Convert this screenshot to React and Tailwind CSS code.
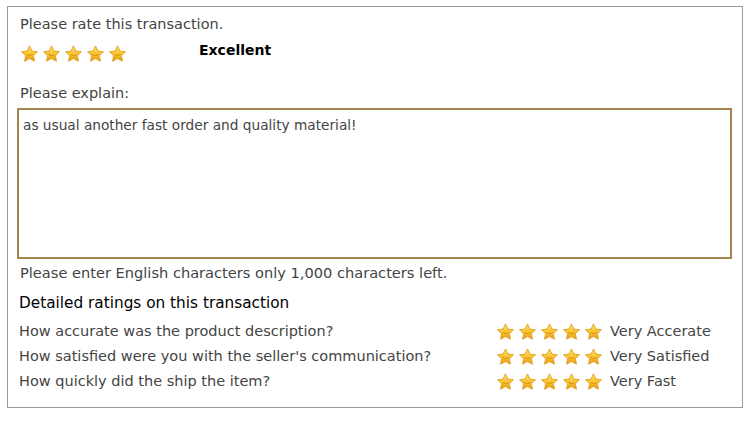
import React from 'react';

const Star = () => (
  <svg width="19" height="18" viewBox="0 0 24 23" className="shrink-0">
    <defs>
      <linearGradient id="sg" x1="0" y1="0" x2="0" y2="1">
        <stop offset="0" stopColor="#ffe36a" />
        <stop offset="0.6" stopColor="#f7c02a" />
        <stop offset="1" stopColor="#e8951a" />
      </linearGradient>
    </defs>
    <path
      d="M12 1.2l3.1 6.6 7.1.9-5.2 4.9 1.3 7.1L12 17.3l-6.3 3.4 1.3-7.1-5.2-4.9 7.1-.9z"
      fill="url(#sg)"
      stroke="#e0a020"
      strokeWidth="1.2"
      strokeLinejoin="round"
    />
    <path d="M8.5 12.5q3.5 2.6 7 0" stroke="#d98a10" strokeWidth="1.2" fill="none" strokeLinecap="round" />
  </svg>
);

const Stars = () => (
  <div className="flex gap-[3px]">
    {[0, 1, 2, 3, 4].map(i => <Star key={i} />)}
  </div>
);

const rows = [
  ['How accurate was the product description?', 'Very Accerate'],
  ["How satisfied were you with the seller's communication?", 'Very Satisfied'],
  ['How quickly did the ship the item?', 'Very Fast'],
];

export default function App() {
  return (
    <div className="w-[750px] h-[423px] bg-white pt-[6px] pl-[7px]" style={{ fontFamily: '"DejaVu Sans", Verdana, sans-serif' }}>
      <div className="w-[736px] h-[402px] border border-[#9a9a9a] pl-[12px] pr-[10px] pt-[8px] text-[#444]">
        <p className="text-[14.5px] leading-[18px]">Please rate this transaction.</p>
        <div className="flex items-center mt-[15px] h-[12px]">
          <Stars />
          <span className="ml-[72px] -mt-[8px] text-[14px] font-bold text-black">Excellent</span>
        </div>
        <p className="text-[14.5px] leading-[18px] mt-[24px]">Please explain:</p>
        <div className="mt-[6px] -ml-[3px] w-[715px] h-[151px] border-2 border-[#a5834c] px-[4px] pt-[7px] text-[13.7px] leading-[16px]">
          as usual another fast order and quality material!
        </div>
        <p className="text-[14.6px] leading-[18px] mt-[5px]">Please enter English characters only 1,000 characters left.</p>
        <p className="text-[15.3px] leading-[18px] mt-[12px] -ml-[1px] text-black">Detailed ratings on this transaction</p>
        <div className="mt-[7px] flex flex-col">
          {rows.map(([q, a]) => (
            <div key={q} className="flex items-center h-[25px] -ml-[1px]">
              <span className="w-[477px] text-[14.5px]">{q}</span>
              <Stars />
              <span className="ml-[7px] text-[14.5px]">{a}</span>
            </div>
          ))}
        </div>
      </div>
    </div>
  );
}
